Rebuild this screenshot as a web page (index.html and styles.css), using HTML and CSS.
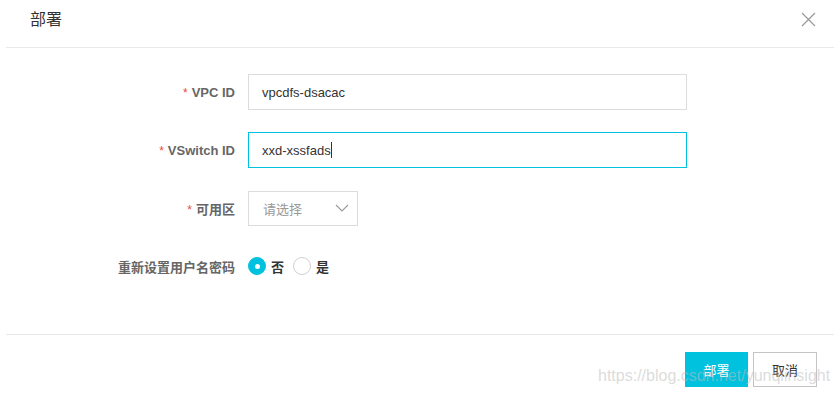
FILE: index.html
```html
<!DOCTYPE html>
<html lang="zh-CN">
  <head>
    <meta charset="UTF-8" />
    <meta name="viewport" content="width=device-width, initial-scale=1.0" />
    <title>部署</title>
    <link rel="stylesheet" href="styles.css">
  </head>
  <body>
    <div class="dialog">
      <div class="dialog-header">
        <h1>部署</h1>
        <button class="close-btn" aria-label="关闭">
          <svg width="15" height="15" viewBox="0 0 15 15">
            <path d="M1 1 L14 14 M14 1 L1 14" stroke="#999" stroke-width="1.2" fill="none" />
          </svg>
        </button>
      </div>

      <form class="dialog-body">
        <div class="form-item">
          <label class="form-label"><span class="required">*</span>VPC ID</label>
          <input class="input" type="text" value="vpcdfs-dsacac" />
        </div>

        <div class="form-item">
          <label class="form-label"><span class="required">*</span>VSwitch ID</label>
          <div class="input input-focus">xxd-xssfads<span class="caret"></span></div>
        </div>

        <div class="form-item">
          <label class="form-label"><span class="required">*</span>可用区</label>
          <div class="select">
            <span class="placeholder">请选择</span>
            <svg width="14" height="8" viewBox="0 0 14 8">
              <path d="M1 1 L7 7 L13 1" stroke="#999" stroke-width="1.1" fill="none" />
            </svg>
          </div>
        </div>

        <div class="form-item">
          <label class="form-label">重新设置用户名密码</label>
          <div class="radio-group">
            <label class="radio"><span class="radio-dot checked"></span>否</label>
            <label class="radio"><span class="radio-dot"></span>是</label>
          </div>
        </div>
      </form>

      <div class="dialog-footer">
        <button class="btn btn-primary">部署</button>
        <button class="btn">取消</button>
      </div>

      <div class="watermark">https://blog.csdn.net/yunqiinsight</div>
    </div>
  </body>
</html>
```

FILE: styles.css
```css
:root {
  --primary-color: #00c1de;
  --text-color: #333333;
  --label-color: #666666;
  --border-color: #dcdcdc;
  --line-color: #e8e8e8;
}

* {
  margin: 0;
  padding: 0;
  box-sizing: border-box;
  font-family: 'Liberation Sans', 'Noto Sans CJK SC', sans-serif;
}

body {
  background-color: white;
  color: var(--text-color);
  width: 839px;
  height: 397px;
  overflow: hidden;
}

.dialog {
  position: relative;
  margin: 0 5px 0 6px;
}

.dialog-header {
  display: flex;
  align-items: center;
  justify-content: space-between;
  height: 48px;
  padding: 0 18px 8px 24px;
  border-bottom: 1px solid var(--line-color);
}

.dialog-header h1 {
  font-size: 16px;
  font-weight: normal;
  color: var(--text-color);
  line-height: 20px;
}

.close-btn {
  background: none;
  border: none;
  width: 15px;
  height: 15px;
  display: flex;
  cursor: pointer;
}

.dialog-body {
  padding: 26px 0 28px;
}

.form-item {
  display: flex;
  align-items: center;
  height: 36px;
  margin-bottom: 22px;
}

.form-label {
  width: 229px;
  text-align: right;
  font-size: 13px;
  font-weight: bold;
  color: var(--label-color);
  margin-right: 13px;
}

.required {
  color: #e84c3d;
  font-weight: normal;
  font-size: 12px;
  margin-right: 4px;
}

.input {
  width: 439px;
  height: 36px;
  border: 1px solid var(--border-color);
  padding: 0 13px;
  font-size: 13px;
  color: var(--text-color);
  outline: none;
  display: flex;
  align-items: center;
}

.input-focus {
  border-color: var(--primary-color);
}

.caret {
  display: inline-block;
  width: 1px;
  height: 16px;
  background-color: #333;
}

.select {
  width: 110px;
  height: 35px;
  border: 1px solid var(--border-color);
  padding: 0 8px 0 14px;
  display: flex;
  align-items: center;
  justify-content: space-between;
  font-size: 13px;
}

.placeholder {
  color: #999;
}

.radio-group {
  display: flex;
  gap: 9px;
}

.radio {
  display: flex;
  align-items: center;
  gap: 5px;
  font-size: 13px;
  font-weight: bold;
  color: var(--text-color);
}

.radio-dot {
  width: 18px;
  height: 18px;
  border-radius: 50%;
  border: 1px solid #d0d0d0;
  background-color: white;
  display: flex;
  align-items: center;
  justify-content: center;
}

.radio-dot.checked {
  border-color: var(--primary-color);
  background-color: var(--primary-color);
}

.radio-dot.checked::after {
  content: '';
  width: 5px;
  height: 5px;
  border-radius: 50%;
  background-color: white;
}

.dialog-footer {
  display: flex;
  justify-content: flex-end;
  gap: 5px;
  padding: 17px 17px 0 0;
  border-top: 1px solid var(--line-color);
}

.btn {
  width: 64px;
  height: 35px;
  font-size: 13px;
  color: var(--text-color);
  background-color: white;
  border: 1px solid #c4c4c4;
  cursor: pointer;
}

.btn-primary {
  width: 63px;
  background-color: var(--primary-color);
  border-color: var(--primary-color);
  color: white;
}

.watermark {
  position: absolute;
  left: 592px;
  top: 367px;
  font-size: 16px;
  white-space: nowrap;
  color: rgba(190, 190, 190, 0.55);
  pointer-events: none;
}
```
